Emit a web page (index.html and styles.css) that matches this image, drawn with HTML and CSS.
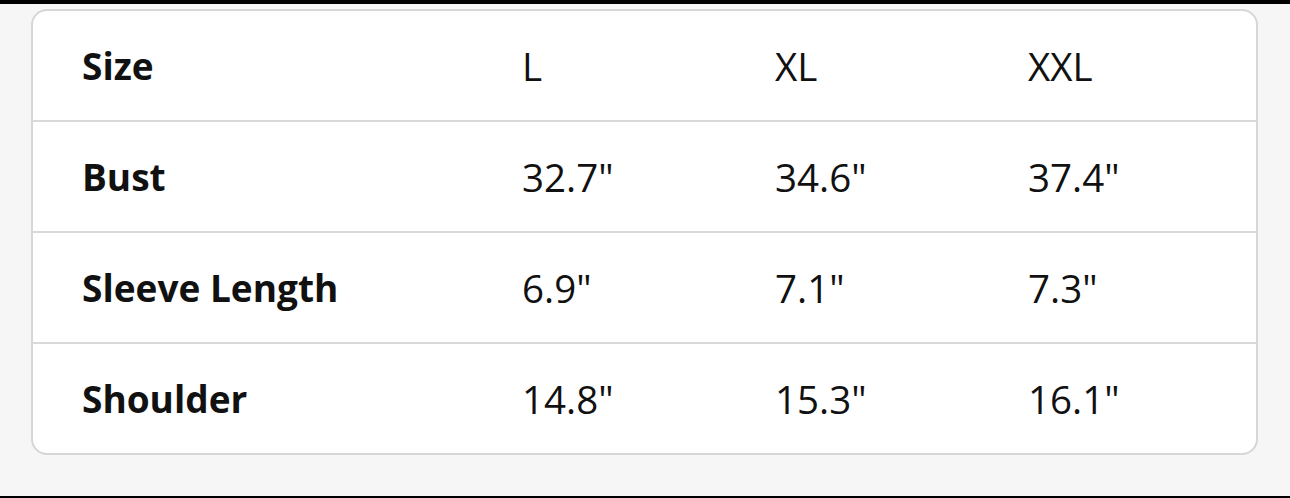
FILE: index.html
```html
<!DOCTYPE html>
<html lang="en">

<head>
    <meta charset="UTF-8">
    <meta name="viewport" content="width=device-width, initial-scale=1.0">
    <title>Size Chart</title>
    <link rel="stylesheet" href="styles.css">
</head>

<body>
    <div class="top-bar"></div>

    <div class="chart-card">
        <div class="chart-row">
            <div class="chart-label">Size</div>
            <div class="chart-cell">L</div>
            <div class="chart-cell">XL</div>
            <div class="chart-cell">XXL</div>
        </div>
        <div class="chart-row">
            <div class="chart-label">Bust</div>
            <div class="chart-cell">32.7"</div>
            <div class="chart-cell">34.6"</div>
            <div class="chart-cell">37.4"</div>
        </div>
        <div class="chart-row">
            <div class="chart-label">Sleeve Length</div>
            <div class="chart-cell">6.9"</div>
            <div class="chart-cell">7.1"</div>
            <div class="chart-cell">7.3"</div>
        </div>
        <div class="chart-row">
            <div class="chart-label">Shoulder</div>
            <div class="chart-cell">14.8"</div>
            <div class="chart-cell">15.3"</div>
            <div class="chart-cell">16.1"</div>
        </div>
    </div>

    <div class="bottom-line"></div>
</body>

</html>
```

FILE: styles.css
```css
body {
    margin: 0;
    height: 498px;
    display: flex;
    flex-direction: column;
    background: #f6f6f6;
    font-family: "Open Sans", "Noto Sans", sans-serif;
    color: #111111;
}

.top-bar {
    height: 4px;
    background: #000000;
}

.chart-card {
    margin: 5px 32px 0 31px;
    background: #ffffff;
    border: 2px solid #d6d6d6;
    border-radius: 16px;
}

.chart-row {
    display: grid;
    grid-template-columns: 440px 253px 253px 1fr;
    align-items: center;
    height: 109px;
    padding-left: 49px;
    font-size: 37px;
    border-bottom: 2px solid #d9d9d9;
}

.chart-row:last-child {
    border-bottom: none;
}

.chart-label {
    font-weight: 700;
}

.chart-cell {
    font-size: 38.5px;
}

.bottom-line {
    margin-top: auto;
    height: 2px;
    background: #000000;
}
```
